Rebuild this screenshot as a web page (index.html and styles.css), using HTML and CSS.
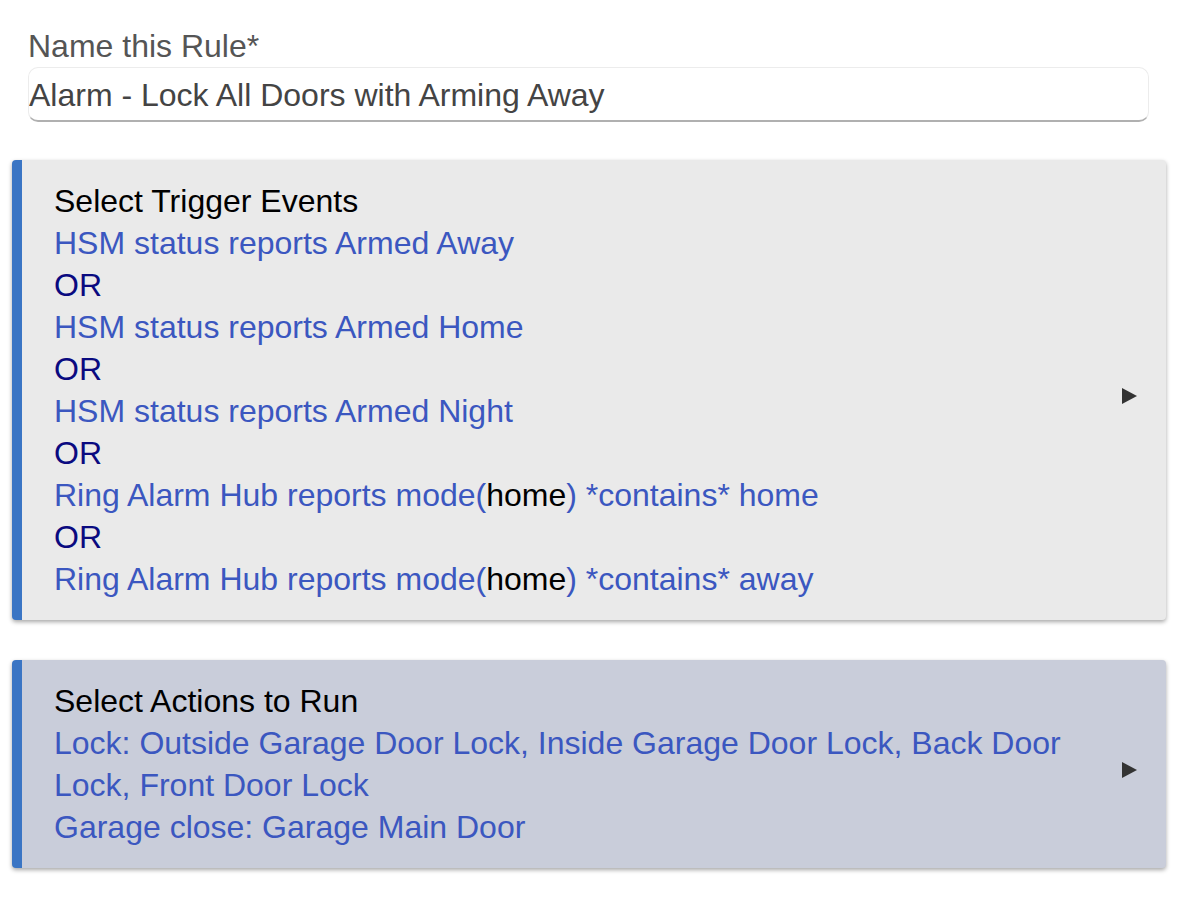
FILE: index.html
```html
<!DOCTYPE html>
<html lang="en">
<head>
    <meta charset="UTF-8">
    <meta name="viewport" content="width=device-width, initial-scale=1.0">
    <title>Rule Machine</title>
    <link rel="stylesheet" href="styles.css">
</head>
<body>
    <div class="name-field">
        <label class="name-label" for="rule-name">Name this Rule*</label>
        <input class="name-input" id="rule-name" type="text" value="Alarm - Lock All Doors with Arming Away">
    </div>

    <div class="section triggers">
        <div class="section-body">
            <div class="section-title">Select Trigger Events</div>
            <div class="link">HSM status reports Armed Away</div>
            <div class="or">OR</div>
            <div class="link">HSM status reports Armed Home</div>
            <div class="or">OR</div>
            <div class="link">HSM status reports Armed Night</div>
            <div class="or">OR</div>
            <div class="link">Ring Alarm Hub reports mode(<span class="val">home</span>) *contains* home</div>
            <div class="or">OR</div>
            <div class="link">Ring Alarm Hub reports mode(<span class="val">home</span>) *contains* away</div>
        </div>
        <span class="arrow"></span>
    </div>

    <div class="section actions">
        <div class="section-body">
            <div class="section-title">Select Actions to Run</div>
            <div class="link">Lock: Outside Garage Door Lock, Inside Garage Door Lock, Back Door Lock, Front Door Lock</div>
            <div class="link">Garage close: Garage Main Door</div>
        </div>
        <span class="arrow"></span>
    </div>
</body>
</html>
```

FILE: styles.css
```css
* {
    margin: 0;
    padding: 0;
    box-sizing: border-box;
    font-family: "Liberation Sans", Arial, sans-serif;
}

body {
    background-color: #ffffff;
    padding: 25px 29px 20px 12px;
    font-size: 32px;
    line-height: 42px;
}

.name-field {
    margin: 0 17px 38px 16px;
}

.name-label {
    display: block;
    color: #555555;
}

.name-input {
    display: block;
    width: 100%;
    height: 55px;
    border: 1px solid #ececec;
    border-bottom: 2px solid #b0b0b0;
    border-radius: 10px;
    background: #ffffff;
    color: #444444;
    font-size: 32px;
    padding: 3px 0 0 0;
    outline: none;
}

.section {
    display: flex;
    align-items: center;
    gap: 20px;
    border-left: 10px solid #3a75c4;
    border-radius: 4px;
    padding: 20px 29px 20px 32px;
    box-shadow: 0 2px 4px rgba(0, 0, 0, 0.35);
    margin-bottom: 40px;
}

.triggers {
    background-color: #eaeaea;
}

.actions {
    background-color: #c9cdda;
}

.section-body {
    flex: 1;
}

.section-title {
    color: #000000;
}

.link {
    color: #3b57c0;
}

.or {
    color: #0a0a80;
}

.val {
    color: #000000;
}

.arrow {
    width: 0;
    height: 0;
    margin-top: 12px;
    border-left: 15px solid #333333;
    border-top: 8px solid transparent;
    border-bottom: 8px solid transparent;
}
```
